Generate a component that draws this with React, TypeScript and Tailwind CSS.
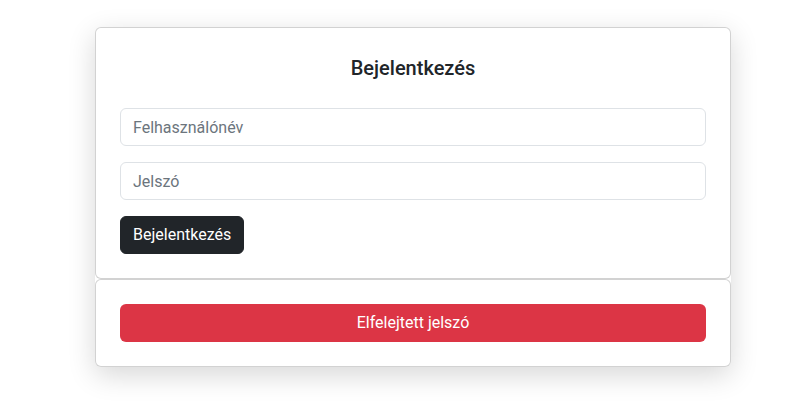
const App = () => {
  return (
    <div className="min-h-screen bg-white font-['Roboto',sans-serif] text-[#212529]">
      <div className="ml-[95px] pt-[27px] w-[636px]">
        <div className="rounded-md shadow-[0_8px_28px_rgba(0,0,0,0.16)]">
          <div className="bg-white border border-black/[0.175] rounded-md px-6 pt-7 pb-6">
            <h5 className="text-center text-[20px] leading-6 font-medium mb-7">Bejelentkezés</h5>
            <div className="flex flex-col gap-4">
              <input
                type="text"
                placeholder="Felhasználónév"
                className="h-[38px] w-full rounded-md border border-[#dee2e6] px-3 text-base placeholder:text-[#6c757d] outline-none"
              />
              <input
                type="password"
                placeholder="Jelszó"
                className="h-[38px] w-full rounded-md border border-[#dee2e6] px-3 text-base placeholder:text-[#6c757d] outline-none"
              />
              <div>
                <button className="h-[38px] rounded-md border border-[#212529] bg-[#212529] px-3 text-base text-white">
                  Bejelentkezés
                </button>
              </div>
            </div>
          </div>
          <div className="bg-white border border-black/[0.175] rounded-md p-6">
            <button className="h-[38px] w-full rounded-md bg-[#dc3545] text-base text-white">
              Elfelejtett jelszó
            </button>
          </div>
        </div>
      </div>
    </div>
  );
};

export default App;
